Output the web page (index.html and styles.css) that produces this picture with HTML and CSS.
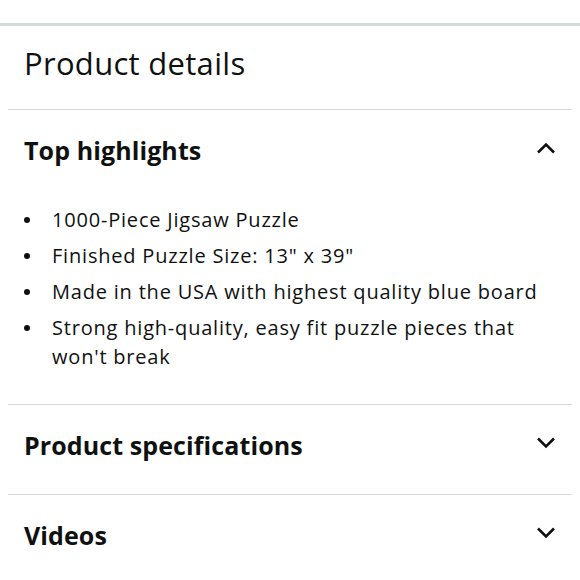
FILE: index.html
```html
<!DOCTYPE html>
<html lang="en">
<head>
<meta charset="utf-8">
<title>Product details</title>
<link rel="stylesheet" href="styles.css">
</head>
<body>
<div class="topbar"></div>
<main class="page">
  <h1 class="title">Product details</h1>
  <section class="acc">
    <div class="acc-head">
      <h2 class="acc-title">Top highlights</h2>
      <svg class="chev" width="20" height="12" viewBox="0 0 20 12"><polyline points="2,10.5 10,2.5 18,10.5" fill="none" stroke="#0f1111" stroke-width="2.6"/></svg>
    </div>
    <ul class="list">
      <li>1000-Piece Jigsaw Puzzle</li>
      <li>Finished Puzzle Size: 13" x 39"</li>
      <li>Made in the USA with highest quality blue board</li>
      <li>Strong high-quality, easy fit puzzle pieces that won't break</li>
    </ul>
  </section>
  <section class="acc">
    <div class="acc-head">
      <h2 class="acc-title">Product specifications</h2>
      <svg class="chev" width="20" height="12" viewBox="0 0 20 12"><polyline points="2,1.5 10,9.5 18,1.5" fill="none" stroke="#0f1111" stroke-width="2.6"/></svg>
    </div>
  </section>
  <section class="acc">
    <div class="acc-head">
      <h2 class="acc-title">Videos</h2>
      <svg class="chev" width="20" height="12" viewBox="0 0 20 12"><polyline points="2,1.5 10,9.5 18,1.5" fill="none" stroke="#0f1111" stroke-width="2.6"/></svg>
    </div>
  </section>
</main>
</body>
</html>
```
FILE: styles.css
```css
* { box-sizing: border-box; }
html, body { margin: 0; padding: 0; background: #fff; }
body {
  font-family: "Open Sans", "Noto Sans", sans-serif;
  color: #0f1111;
}
.topbar {
  margin-top: 23px;
  height: 3px;
  background: #d5d9d9;
}
.page {
  padding: 0 8px;
}
.title {
  margin: 0;
  padding: 17px 16px 26px;
  font-size: 31px;
  line-height: 40px;
  font-weight: 400;
  letter-spacing: 0.3px;
  border-bottom: 1px solid #d5d9d9;
}
.acc {
  border-bottom: 1px solid #d5d9d9;
}
.acc-head {
  display: flex;
  align-items: center;
  justify-content: space-between;
  padding: 25px 16px 34px;
}
.acc-title {
  margin: 0;
  font-size: 25px;
  line-height: 30px;
  font-weight: 700;
  letter-spacing: 0.1px;
}
.chev {
  display: block;
  margin-top: -5px;
}
.list {
  list-style: none;
  margin: 0;
  padding: 6px 16px 33px;
  font-size: 20px;
  line-height: 29px;
  letter-spacing: 0.8px;
}
.list li {
  display: grid;
  grid-template-columns: 28px 1fr;
  margin-bottom: 7px;
}
.list li:last-child { margin-bottom: 0; }
.list li::before {
  content: "";
  width: 6px;
  height: 6px;
  margin-top: 12px;
  border-radius: 50%;
  background: #0f1111;
}
```
